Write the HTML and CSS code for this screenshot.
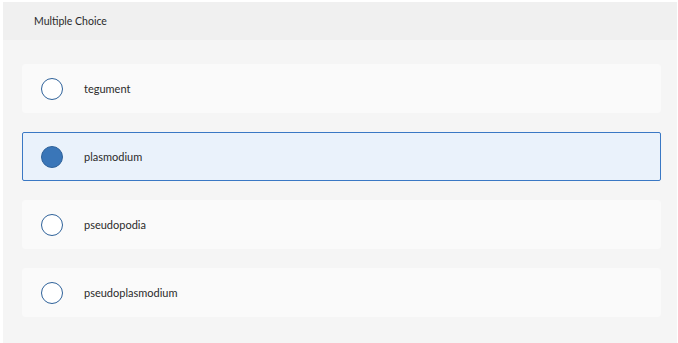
FILE: index.html
```html
<!DOCTYPE html>
<html lang="en">
<head>
    <meta charset="UTF-8">
    <title>Multiple Choice</title>
    <link rel="stylesheet" href="styles.css">
</head>
<body>
    <div class="question">
        <div class="question-header">Multiple Choice</div>

        <div class="choices">
            <label class="choice">
                <span class="radio"></span>
                <span class="choice-text">tegument</span>
            </label>
            <label class="choice selected">
                <span class="radio"></span>
                <span class="choice-text">plasmodium</span>
            </label>
            <label class="choice">
                <span class="radio"></span>
                <span class="choice-text">pseudopodia</span>
            </label>
            <label class="choice">
                <span class="radio"></span>
                <span class="choice-text">pseudoplasmodium</span>
            </label>
        </div>
    </div>
</body>
</html>
```

FILE: styles.css
```css
body {
    margin: 0;
    padding: 2px 1px 0 3px;
    background-color: #fff;
    font-family: Lato, "Open Sans", Arial, sans-serif;
    color: #2a2a2a;
}
.question {
    background-color: #f5f5f5;
    min-height: 341px;
}
.question-header {
    background-color: #f0f0f0;
    height: 38px;
    line-height: 38px;
    padding-left: 31px;
    font-size: 10.5px;
}
.choices {
    display: flex;
    flex-direction: column;
    gap: 19px;
    padding: 24px 16px 0 19px;
}
.choice {
    display: flex;
    align-items: center;
    height: 49px;
    background-color: #fafafa;
    border: 1px solid #fafafa;
    border-radius: 3px;
    box-sizing: border-box;
    padding-left: 18px;
    cursor: pointer;
}
.choice.selected {
    background-color: #eaf2fb;
    border-color: #3a78c4;
    border-radius: 2px;
}
.radio {
    width: 20px;
    height: 20px;
    border: 1.5px solid #2f629a;
    border-radius: 50%;
    background-color: #fff;
    box-sizing: content-box;
}
.selected .radio {
    background-color: #3a76b8;
    border-color: #2f629a;
}
.choice-text {
    margin-left: 21px;
    font-size: 11px;
}
```
